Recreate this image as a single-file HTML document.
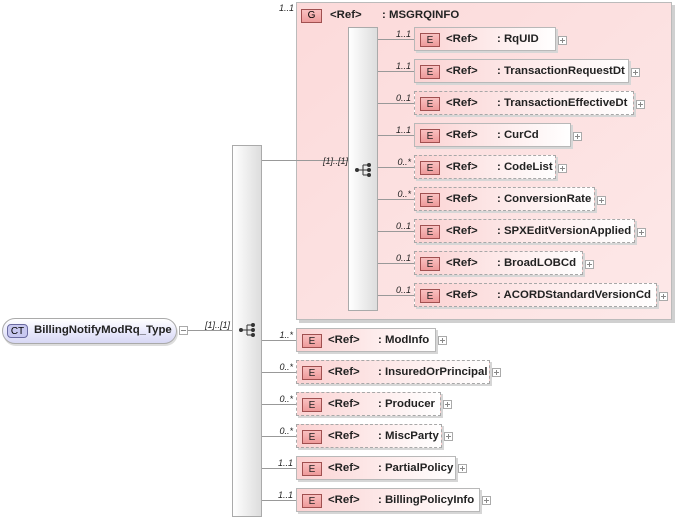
<!DOCTYPE html>
<html><head><meta charset="utf-8"><style>
body{margin:0;width:678px;height:520px;background:#fff;position:relative;overflow:hidden;font-family:"Liberation Sans",Arial,sans-serif;}
.a{position:absolute}
.el{position:absolute;height:24px;border:1px solid #b8b8b8;background:linear-gradient(to right,#fbd3d3,#fff);box-shadow:2px 2px 0 #d6d6d6;box-sizing:border-box;font-size:11.4px;font-weight:bold;color:#222}
.el.d{border:1px dashed #a8a8a8}
.el .b{position:absolute;left:5px;top:5px;width:20px;height:14px;border:1px solid #a05050;background:linear-gradient(#f9c0c0,#ee9a9a);box-sizing:border-box;font-size:10px;font-weight:normal;text-align:center;line-height:13px;color:#222}
.el .r{position:absolute;left:31px;top:5px}
.el .n{position:absolute;top:5px;white-space:nowrap}
.pl{position:absolute;width:9px;height:9px;border:1px solid #aaa;background:#fff;box-sizing:border-box}
.pl:before{content:"";position:absolute;left:1px;top:3px;width:5px;height:1px;background:#888}
.pl.p:after{content:"";position:absolute;left:3px;top:1px;width:1px;height:5px;background:#888}
.h{position:absolute;height:1px;background:#999}
.lb{position:absolute;font-size:9px;font-style:italic;color:#222;text-align:right;width:32px}
.seq{position:absolute;width:30px;background:linear-gradient(to right,#fff,#ddd);border:1px solid #aaa;box-sizing:border-box}
</style></head><body>
<div class="a" style="left:2px;top:318px;width:175px;height:26px;border:1px solid #aaa;border-radius:13px;background:linear-gradient(#fff,#e6e6fb 60%,#d8d8f4);box-sizing:border-box;box-shadow:1px 2px 0 #ddd"></div>
<div class="a" style="left:7px;top:324px;width:21px;height:14px;border:1px solid #6a6aa0;border-radius:4px;background:#c8c8f0;font-size:10px;text-align:center;line-height:13px;box-sizing:border-box">CT</div>
<div class="a" style="left:34px;top:324px;font-size:11.4px;font-weight:bold;color:#222">BillingNotifyModRq_Type</div>
<div class="pl" style="left:179px;top:326px"></div>
<div class="h" style="left:188px;top:330px;width:44px"></div>
<div class="lb" style="left:198px;top:320px">[1]..[1]</div>
<div class="seq" style="left:232px;top:145px;height:372px"></div>
<svg class="a" style="left:238px;top:322px" width="20" height="16"><line x1="3" y1="8" x2="9" y2="8" stroke="#333"/><line x1="9" y1="3" x2="9" y2="13" stroke="#333"/><line x1="9" y1="3" x2="15" y2="3" stroke="#333"/><line x1="9" y1="8" x2="15" y2="8" stroke="#333"/><line x1="9" y1="13" x2="15" y2="13" stroke="#333"/><circle cx="3" cy="8" r="2" fill="#333"/><circle cx="15" cy="3" r="2" fill="#333"/><circle cx="15" cy="8" r="2" fill="#333"/><circle cx="15" cy="13" r="2" fill="#333"/></svg>
<div class="a" style="left:296px;top:2px;width:376px;height:318px;border:1px solid #bbb;background:linear-gradient(to bottom right,#fcdada,#fde8e8);box-sizing:border-box;box-shadow:3px 3px 0 #d0d0d0"></div>
<div class="lb" style="left:262px;top:3px">1..1</div>
<div class="a" style="left:301px;top:9px;width:21px;height:14px;border:1px solid #a05050;background:linear-gradient(#f9c0c0,#ee9c9c);box-sizing:border-box;font-size:10px;text-align:center;line-height:12px">G</div>
<div class="a" style="left:330px;top:9px;font-size:11.4px;font-weight:bold;color:#222">&lt;Ref&gt;</div>
<div class="a" style="left:382px;top:9px;font-size:11.4px;font-weight:bold;color:#222">: MSGRQINFO</div>
<div class="h" style="left:262px;top:160px;width:86px"></div>
<div class="lb" style="left:316px;top:156px">[1]..[1]</div>
<div class="seq" style="left:348px;top:27px;height:284px"></div>
<svg class="a" style="left:354px;top:162px" width="20" height="16"><line x1="3" y1="8" x2="9" y2="8" stroke="#333"/><line x1="9" y1="3" x2="9" y2="13" stroke="#333"/><line x1="9" y1="3" x2="15" y2="3" stroke="#333"/><line x1="9" y1="8" x2="15" y2="8" stroke="#333"/><line x1="9" y1="13" x2="15" y2="13" stroke="#333"/><circle cx="3" cy="8" r="2" fill="#333"/><circle cx="15" cy="3" r="2" fill="#333"/><circle cx="15" cy="8" r="2" fill="#333"/><circle cx="15" cy="13" r="2" fill="#333"/></svg>

<div class="h" style="left:378px;top:39px;width:36px"></div><div class="lb" style="left:379px;top:29px">1..1</div>
<div class="el" style="left:414px;top:27px;width:142px"><div class="b">E</div><span class="r">&lt;Ref&gt;</span><span class="n" style="left:82px">: RqUID</span></div><div class="pl p" style="left:558px;top:36px"></div>

<div class="h" style="left:378px;top:71px;width:36px"></div><div class="lb" style="left:379px;top:61px">1..1</div>
<div class="el" style="left:414px;top:59px;width:215px"><div class="b">E</div><span class="r">&lt;Ref&gt;</span><span class="n" style="left:82px">: TransactionRequestDt</span></div><div class="pl p" style="left:631px;top:68px"></div>

<div class="h" style="left:378px;top:103px;width:36px"></div><div class="lb" style="left:379px;top:93px">0..1</div>
<div class="el d" style="left:414px;top:91px;width:220px"><div class="b">E</div><span class="r">&lt;Ref&gt;</span><span class="n" style="left:82px">: TransactionEffectiveDt</span></div><div class="pl p" style="left:636px;top:100px"></div>

<div class="h" style="left:378px;top:135px;width:36px"></div><div class="lb" style="left:379px;top:125px">1..1</div>
<div class="el" style="left:414px;top:123px;width:157px"><div class="b">E</div><span class="r">&lt;Ref&gt;</span><span class="n" style="left:82px">: CurCd</span></div><div class="pl p" style="left:573px;top:132px"></div>

<div class="h" style="left:378px;top:167px;width:36px"></div><div class="lb" style="left:379px;top:157px">0..*</div>
<div class="el d" style="left:414px;top:155px;width:142px"><div class="b">E</div><span class="r">&lt;Ref&gt;</span><span class="n" style="left:82px">: CodeList</span></div><div class="pl p" style="left:558px;top:164px"></div>

<div class="h" style="left:378px;top:199px;width:36px"></div><div class="lb" style="left:379px;top:189px">0..*</div>
<div class="el d" style="left:414px;top:187px;width:181px"><div class="b">E</div><span class="r">&lt;Ref&gt;</span><span class="n" style="left:82px">: ConversionRate</span></div><div class="pl p" style="left:597px;top:196px"></div>

<div class="h" style="left:378px;top:231px;width:36px"></div><div class="lb" style="left:379px;top:221px">0..1</div>
<div class="el d" style="left:414px;top:219px;width:221px"><div class="b">E</div><span class="r">&lt;Ref&gt;</span><span class="n" style="left:82px">: SPXEditVersionApplied</span></div><div class="pl p" style="left:637px;top:228px"></div>

<div class="h" style="left:378px;top:263px;width:36px"></div><div class="lb" style="left:379px;top:253px">0..1</div>
<div class="el d" style="left:414px;top:251px;width:169px"><div class="b">E</div><span class="r">&lt;Ref&gt;</span><span class="n" style="left:82px">: BroadLOBCd</span></div><div class="pl p" style="left:585px;top:260px"></div>

<div class="h" style="left:378px;top:295px;width:36px"></div><div class="lb" style="left:379px;top:285px">0..1</div>
<div class="el d" style="left:414px;top:283px;width:243px"><div class="b">E</div><span class="r">&lt;Ref&gt;</span><span class="n" style="left:82px">: ACORDStandardVersionCd</span></div><div class="pl p" style="left:659px;top:292px"></div>

<div class="h" style="left:262px;top:340px;width:34px"></div><div class="lb" style="left:261px;top:330px">1..*</div>
<div class="el" style="left:296px;top:328px;width:140px"><div class="b">E</div><span class="r">&lt;Ref&gt;</span><span class="n" style="left:81px">: ModInfo</span></div><div class="pl p" style="left:438px;top:336px"></div>

<div class="h" style="left:262px;top:372px;width:34px"></div><div class="lb" style="left:261px;top:362px">0..*</div>
<div class="el d" style="left:296px;top:360px;width:194px"><div class="b">E</div><span class="r">&lt;Ref&gt;</span><span class="n" style="left:81px">: InsuredOrPrincipal</span></div><div class="pl p" style="left:492px;top:368px"></div>

<div class="h" style="left:262px;top:404px;width:34px"></div><div class="lb" style="left:261px;top:394px">0..*</div>
<div class="el d" style="left:296px;top:392px;width:145px"><div class="b">E</div><span class="r">&lt;Ref&gt;</span><span class="n" style="left:81px">: Producer</span></div><div class="pl p" style="left:443px;top:400px"></div>

<div class="h" style="left:262px;top:436px;width:34px"></div><div class="lb" style="left:261px;top:426px">0..*</div>
<div class="el d" style="left:296px;top:424px;width:146px"><div class="b">E</div><span class="r">&lt;Ref&gt;</span><span class="n" style="left:81px">: MiscParty</span></div><div class="pl p" style="left:444px;top:432px"></div>

<div class="h" style="left:262px;top:468px;width:34px"></div><div class="lb" style="left:261px;top:458px">1..1</div>
<div class="el" style="left:296px;top:456px;width:160px"><div class="b">E</div><span class="r">&lt;Ref&gt;</span><span class="n" style="left:81px">: PartialPolicy</span></div><div class="pl p" style="left:458px;top:464px"></div>

<div class="h" style="left:262px;top:500px;width:34px"></div><div class="lb" style="left:261px;top:490px">1..1</div>
<div class="el" style="left:296px;top:488px;width:184px"><div class="b">E</div><span class="r">&lt;Ref&gt;</span><span class="n" style="left:81px">: BillingPolicyInfo</span></div><div class="pl p" style="left:482px;top:496px"></div>
</body></html>
